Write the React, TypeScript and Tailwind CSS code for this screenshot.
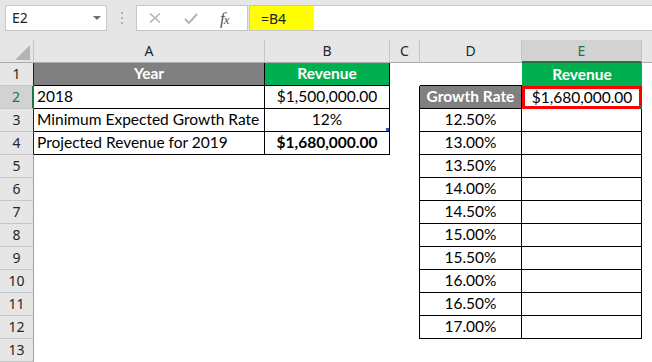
import React from "react";

const pct: Record<number, string> = {
  3: "12.50%",
  4: "13.00%",
  5: "13.50%",
  6: "14.00%",
  7: "14.50%",
  8: "15.00%",
  9: "15.50%",
  10: "16.00%",
  11: "16.50%",
  12: "17.00%",
};

function TopBar() {
  return (
    <div className="h-[40px] shrink-0 bg-[#e6e6e6] flex items-start pt-[5px] font-['Noto_Sans',sans-serif]">
      <div className="ml-[5px] w-[102px] h-[26px] bg-white border border-[#c6c6c6] flex items-center justify-between pl-[6px] pr-[5px]">
        <span className="text-[14px] leading-none text-[#222]">E2</span>
        <svg width="8" height="4" viewBox="0 0 8 4">
          <path d="M0 0H8L4 4Z" fill="#6d6d6d" />
        </svg>
      </div>
      <div className="ml-[14px] mt-[7px] flex flex-col gap-[3px]">
        <div className="w-[2px] h-[2px] bg-[#b0b0b0]" />
        <div className="w-[2px] h-[2px] bg-[#b0b0b0]" />
        <div className="w-[2px] h-[2px] bg-[#b0b0b0]" />
      </div>
      <div className="ml-[13px] w-[112px] h-[26px] bg-white border border-[#c6c6c6] flex items-center pl-[12px]">
        <svg width="12" height="10" viewBox="0 0 12 10">
          <path d="M1 0.5L11 9.5M11 0.5L1 9.5" stroke="#b4b4b4" strokeWidth="1.5" />
        </svg>
        <svg className="ml-[23px]" width="14" height="11" viewBox="0 0 14 11">
          <path d="M1 6L5 10L13 1" stroke="#b4b4b4" strokeWidth="2" fill="none" />
        </svg>
        <span className="ml-[22px] font-['Liberation_Serif',serif] italic text-[17px] leading-none text-[#555] tracking-[-1px]">
          f<span className="text-[13px]">x</span>
        </span>
      </div>
      <div className="ml-[1px] flex-1 h-[26px] bg-white border border-[#c6c6c6] border-r-0">
        <div className="w-[64px] h-full bg-[#ffff00] flex items-center pl-[11px] text-[14px] text-[#222]">
          =B4
        </div>
      </div>
    </div>
  );
}

function ColHeader({ label, selected }: { label: string; selected?: boolean }) {
  if (selected) {
    return (
      <div className="bg-[#d2d2d2] border-r border-[#c6c6c6] border-b-2 border-b-[#217346] flex items-center justify-center text-[14px] text-[#217346]">
        {label}
      </div>
    );
  }
  return (
    <div className="bg-[#e6e6e6] border-r border-[#c6c6c6] border-b border-b-[#ababab] flex items-center justify-center text-[14px] text-[#262626]">
      {label}
    </div>
  );
}

function RowHeader({ n }: { n: number }) {
  if (n === 2) {
    return (
      <div className="bg-[#d2d2d2] border-b border-[#c6c6c6] border-r-2 border-r-[#217346] flex items-center justify-center text-[14px] text-[#217346] font-['Noto_Sans',sans-serif]">
        {n}
      </div>
    );
  }
  if (n <= 4) {
    return (
      <div className="bg-[#e6e6e6] border-b border-[#c6c6c6] border-r border-r-[#202020] flex items-center justify-center text-[14px] text-[#262626] font-['Noto_Sans',sans-serif]">
        {n}
      </div>
    );
  }
  return (
    <div className="bg-[#e6e6e6] border-b border-[#c6c6c6] border-r border-r-[#9e9e9e] flex items-center justify-center text-[14px] text-[#262626] font-['Noto_Sans',sans-serif]">
      {n}
    </div>
  );
}

function Row({ n }: { n: number }) {
  const cells: React.ReactNode[] = [<RowHeader key="h" n={n} />];

  // Column A
  if (n === 1) {
    cells.push(
      <div key="a" className="bg-[#808080] border-r border-b border-black flex items-center justify-center font-bold text-white">
        Year
      </div>
    );
  } else if (n === 2) {
    cells.push(
      <div key="a" className="border-r border-b border-black flex items-center pl-[3px]">
        2018
      </div>
    );
  } else if (n === 3) {
    cells.push(
      <div key="a" className="border-r border-b border-black flex items-center pl-[3px] whitespace-nowrap overflow-hidden">
        Minimum Expected Growth Rate
      </div>
    );
  } else if (n === 4) {
    cells.push(
      <div key="a" className="border-r border-b border-black flex items-center pl-[3px] whitespace-nowrap">
        Projected Revenue for 2019
      </div>
    );
  } else {
    cells.push(<div key="a" />);
  }

  // Column B
  if (n === 1) {
    cells.push(
      <div key="b" className="bg-[#00b050] border-r border-b border-black flex items-center justify-center font-bold text-white">
        Revenue
      </div>
    );
  } else if (n === 2) {
    cells.push(
      <div key="b" className="border-r border-b border-black flex items-center justify-center">
        $1,500,000.00
      </div>
    );
  } else if (n === 3) {
    cells.push(
      <div key="b" className="relative border-r border-b border-black flex items-center justify-center">
        12%
        <div className="absolute right-0 bottom-0 w-[3px] h-[3px] bg-[#3a4db0]" />
      </div>
    );
  } else if (n === 4) {
    cells.push(
      <div key="b" className="border-r border-b border-black flex items-center justify-center font-bold">
        $1,680,000.00
      </div>
    );
  } else {
    cells.push(<div key="b" />);
  }

  // Column C
  if (n >= 2 && n <= 12) {
    cells.push(<div key="c" className="border-r border-black" />);
  } else {
    cells.push(<div key="c" />);
  }

  // Column D
  if (n === 1) {
    cells.push(<div key="d" className="border-b border-black" />);
  } else if (n === 2) {
    cells.push(
      <div key="d" className="bg-[#808080] border-r border-b border-black flex items-center justify-center font-bold text-white whitespace-nowrap">
        Growth Rate
      </div>
    );
  } else if (n <= 12) {
    cells.push(
      <div key="d" className="border-r border-b border-black flex items-center justify-center">
        {pct[n]}
      </div>
    );
  } else {
    cells.push(<div key="d" />);
  }

  // Column E
  if (n === 1) {
    cells.push(
      <div key="e" className="bg-[#00b050] flex items-center justify-center font-bold text-white">
        Revenue
      </div>
    );
  } else if (n === 2) {
    cells.push(
      <div key="e" className="relative border-[3px] border-[#ff0000] flex items-center justify-center">
        $1,680,000.00
        <div className="absolute right-[-3px] bottom-[-3px] w-[3px] h-[3px] bg-[#217346]" />
      </div>
    );
  } else if (n <= 12) {
    cells.push(<div key="e" className="border-r border-b border-black" />);
  } else {
    cells.push(<div key="e" />);
  }

  // Column F
  cells.push(<div key="f" />);

  return <>{cells}</>;
}

export default function App() {
  const rows = Array.from({ length: 13 }, (_, i) => i + 1);
  return (
    <div className="w-[652px] h-[362px] overflow-hidden bg-white flex flex-col">
      <TopBar />
      <div className="grid grid-cols-[34px_231px_125px_30px_102px_120px_10px] auto-rows-[23px] font-['Lato',sans-serif] text-[15.5px] text-black leading-none">
        <div className="bg-[#e6e6e6] border-r border-[#c6c6c6] border-b border-b-[#ababab] relative">
          <svg className="absolute left-0 top-0" width="33" height="22" viewBox="0 0 33 22">
            <path d="M30 5V20H15Z" fill="#b4b4b4" />
          </svg>
        </div>
        <div className="contents font-['Noto_Sans',sans-serif]">
          <ColHeader label="A" />
          <ColHeader label="B" />
          <ColHeader label="C" />
          <ColHeader label="D" />
          <ColHeader label="E" selected />
        </div>
        <div className="bg-[#e6e6e6] border-b border-b-[#ababab]" />
        {rows.map((n) => (
          <Row key={n} n={n} />
        ))}
      </div>
    </div>
  );
}
